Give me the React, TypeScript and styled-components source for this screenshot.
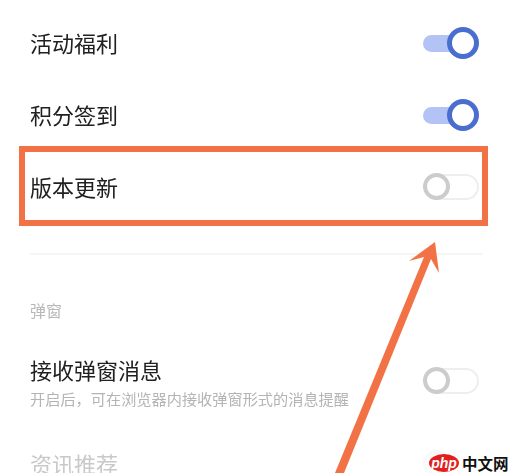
import { createGlobalStyle, styled } from 'styled-components';

const GlobalStyle = createGlobalStyle`
    html, body {
        margin: 0;
        padding: 0;
        background: #fff;
    }
`;

const Page = styled.div`
    position: relative;
    width: 510px;
    height: 473px;
    overflow: hidden;
    background: #fff;
    font-family: "Noto Sans CJK SC", "Noto Sans", sans-serif;
`;

const List = styled.div`
    display: flex;
    flex-direction: column;
    padding: 7px 27px 0 30px;
    filter: blur(0.4px);
`;

const Row = styled.div<{ $height?: number }>`
    display: flex;
    align-items: center;
    justify-content: space-between;
    height: ${({ $height }) => $height ?? 72}px;
    padding-right: 4px;
    flex-shrink: 0;
`;

const Texts = styled.div`
    display: flex;
    flex-direction: column;
    gap: 1px;
`;

const Title = styled.div<{ $muted?: boolean }>`
    font-size: 22px;
    line-height: 30px;
    margin-bottom: 3px;
    color: ${({ $muted }) => ($muted ? '#c9c9c9' : '#202020')};
`;

const Hint = styled.div`
    font-size: 15.2px;
    line-height: 20px;
    color: #b4b4b4;
    white-space: nowrap;
`;

const Divider = styled.div`
    height: 2px;
    margin-top: 30px;
    background: #f5f5f5;
`;

const SectionLabel = styled.div`
    margin: 44px 0 28px;
    font-size: 16px;
    line-height: 22px;
    color: #b8b8b8;
`;

const Track = styled.div<{ $on: boolean }>`
    position: relative;
    width: 56px;
    height: 32px;
    flex-shrink: 0;

    &::before {
        content: '';
        position: absolute;
        left: ${({ $on }) => ($on ? '0' : '1px')};
        right: ${({ $on }) => ($on ? '8px' : '0')};
        top: ${({ $on }) => ($on ? '8px' : '3px')};
        height: ${({ $on }) => ($on ? '17px' : '26px')};
        box-sizing: border-box;
        border-radius: 13px;
        background: ${({ $on }) => ($on ? '#b3c3f6' : '#fff')};
        border: ${({ $on }) => ($on ? 'none' : '2px solid #eeeeee')};
    }
`;

const Thumb = styled.div<{ $on: boolean }>`
    position: absolute;
    box-sizing: border-box;
    border-radius: 50%;
    background: #fff;
    width: ${({ $on }) => ($on ? '32px' : '27px')};
    height: ${({ $on }) => ($on ? '32px' : '27px')};
    top: ${({ $on }) => ($on ? '0' : '2px')};
    left: ${({ $on }) => ($on ? '24px' : '0')};
    border: ${({ $on }) => ($on ? '5px solid #4a6ed0' : '4px solid #cccccc')};
`;

const Faded = styled.div`
    opacity: 0.12;
`;

const Highlight = styled.div`
    position: absolute;
    left: 19px;
    top: 146px;
    width: 469px;
    height: 80px;
    box-sizing: border-box;
    border: 6px solid #f27245;
`;

const Arrow = styled.svg`
    position: absolute;
    left: 0;
    top: 0;
    pointer-events: none;
`;

const Watermark = styled.div`
    position: absolute;
    left: 429px;
    top: 454px;
    display: flex;
    align-items: center;
    gap: 3px;
    height: 18px;
    background: #fff;
    border-radius: 9px;
`;

const PhpBadge = styled.div`
    display: flex;
    align-items: center;
    justify-content: center;
    width: 30px;
    height: 18px;
    border-radius: 50%;
    background: #e0201c;
    color: #fff;
    font-family: "Liberation Sans", sans-serif;
    font-size: 14px;
    font-style: italic;
    font-weight: 700;
    line-height: 18px;
`;

const SiteName = styled.div`
    font-size: 15.5px;
    font-weight: 700;
    line-height: 18px;
    color: #111;
    white-space: nowrap;
`;

const Toggle = ({ on }: { on: boolean }) => (
    <Track $on={on}>
        <Thumb $on={on} />
    </Track>
);

const App = () => (
    <Page>
        <GlobalStyle />
        <List>
            <Row>
                <Title>活动福利</Title>
                <Toggle on />
            </Row>
            <Row>
                <Title>积分签到</Title>
                <Toggle on />
            </Row>
            <Row>
                <Title>版本更新</Title>
                <Toggle on={false} />
            </Row>
            <Divider />
            <SectionLabel>弹窗</SectionLabel>
            <Row $height={64}>
                <Texts>
                    <Title>接收弹窗消息</Title>
                    <Hint>开启后，可在浏览器内接收弹窗形式的消息提醒</Hint>
                </Texts>
                <Toggle on={false} />
            </Row>
            <Row $height={102}>
                <Title $muted>资讯推荐</Title>
                <Faded>
                    <Toggle on={false} />
                </Faded>
            </Row>
        </List>
        <Highlight />
        <Arrow width={510} height={473} viewBox="0 0 510 473">
            <polygon points="435,242 409,261 424,257 335,473 344,473 431,259 439,273" fill="#f27245" />
        </Arrow>
        <Watermark>
            <PhpBadge>php</PhpBadge>
            <SiteName>中文网</SiteName>
        </Watermark>
    </Page>
);

export default App;
